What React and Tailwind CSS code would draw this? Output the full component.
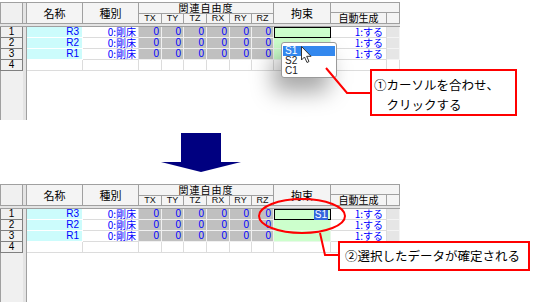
import React from "react";

const F = { fontFamily: '"Noto Sans CJK JP", "Noto Sans", sans-serif' };
const L = { fontFamily: '"Liberation Sans", "Noto Sans CJK JP", sans-serif' };

function HeaderRow() {
  return (
    <div className="flex h-[21px] border-t border-[#a0a0a0]">
      <div className="w-[23px] h-full bg-[#f0f0f0] border-r border-l border-[#a0a0a0]" />
      <div className="w-[4px] h-full bg-[#e4e4e4] border-r border-[#a0a0a0]" />
      <div className="w-[56px] h-full bg-[#f4f4f4] border-r border-[#a0a0a0] flex items-center justify-center text-[11px] leading-none">名称</div>
      <div className="w-[56px] h-full bg-[#f4f4f4] border-r border-[#a0a0a0] flex items-center justify-center text-[11px] leading-none">種別</div>
      <div className="w-[135px] h-full flex flex-col">
        <div className="h-[11px] bg-[#f4f4f4] border-r border-b border-[#a0a0a0] flex items-center justify-center text-[10px] leading-none tracking-[1px]">関連自由度</div>
        <div className="flex h-[10px]">
          {[
            ["TX", "w-[23px]"],
            ["TY", "w-[22px]"],
            ["TZ", "w-[23px]"],
            ["RX", "w-[23px]"],
            ["RY", "w-[22px]"],
            ["RZ", "w-[22px]"],
          ].map(([t, w]) => (
            <div key={t} className={`${w} h-full bg-[#f4f4f4] border-r border-[#a0a0a0] flex items-center justify-center text-[9px] leading-none text-[#111]`} style={L}>
              {t}
            </div>
          ))}
        </div>
      </div>
      <div className="w-[57px] h-full bg-[#f4f4f4] border-r border-[#a0a0a0] flex items-center justify-center text-[11px] leading-none">拘束</div>
      <div className="w-[69px] h-full flex flex-col">
        <div className="h-[11px] bg-[#f4f4f4] border-r border-b border-[#a0a0a0]" />
        <div className="flex h-[10px]">
          <div className="w-[56px] h-full bg-[#f4f4f4] border-r border-[#a0a0a0] flex items-center justify-center text-[10px] leading-none">自動生成</div>
          <div className="w-[13px] h-full bg-[#f4f4f4] border-r border-[#a0a0a0]" />
        </div>
      </div>
    </div>
  );
}

function Band() {
  return <div className="h-[4px] bg-[#e4e4e4] border-t border-b border-[#a0a0a0] w-[400px]" />;
}

function RowNum({ n }) {
  return (
    <div className="w-[23px] h-full bg-[#f0f0f0] border-l border-r border-b border-[#808080] flex items-center justify-center text-[10px] leading-none text-black" style={L}>
      {n}
    </div>
  );
}

function Sep() {
  return <div className="w-[4px] h-full bg-[#e4e4e4] border-r border-[#a0a0a0]" />;
}

const dofW = ["w-[23px]", "w-[22px]", "w-[23px]", "w-[23px]", "w-[22px]", "w-[22px]"];

function DataRow({ n, name, kousoku }) {
  return (
    <div className="flex h-[11px] text-[10px] leading-[10px] text-[#0000ff]">
      <RowNum n={n} />
      <Sep />
      <div className="w-[56px] h-full bg-[#ccfcfc] border-r border-b border-white flex items-center justify-end pr-[3px]" style={L}>{name}</div>
      <div className="w-[56px] h-full bg-white border-r border-b border-[#dcdcdc] flex items-center justify-end pr-[2px]">0:剛床</div>
      {dofW.map((w, i) => (
        <div key={i} className={`${w} h-full bg-[#c0c0c0] border-r border-b border-[#f0f0f0] flex items-center justify-end pr-[2px]`} style={L}>0</div>
      ))}
      {kousoku}
      <div className="w-[56px] h-full bg-white border-r border-b border-[#dcdcdc] flex items-center justify-end pr-[3px]">1:する</div>
      <div className="w-[13px] h-full bg-[#e6e6e6] border-r border-b border-[#f4f4f4]" />
    </div>
  );
}

function EmptyRow() {
  return (
    <div className="flex h-[11px]">
      <RowNum n={4} />
      <Sep />
      {["w-[56px]", "w-[56px]", ...dofW, "w-[57px]", "w-[56px]", "w-[13px]"].map((w, i) => (
        <div key={i} className={`${w} h-full bg-white border-r border-b border-[#dcdcdc]`} />
      ))}
    </div>
  );
}

function Green({ selected, text }) {
  if (selected) {
    return (
      <div className="w-[57px] h-full bg-[#ccffcc] border-[1.5px] border-black flex items-center justify-end pr-[2px]" style={L}>
        {text ? <span className="bg-[#3366dd] text-white px-[1px] leading-none">{text}</span> : null}
      </div>
    );
  }
  return <div className="w-[57px] h-full bg-[#ccffcc] border-r border-b border-[#e8f8e8]" />;
}

function Table({ second }) {
  return (
    <div className="w-[400px] h-[118px] flex flex-col" style={F}>
      <HeaderRow />
      <Band />
      <DataRow n={1} name="R3" kousoku={<Green selected text={second ? "S1" : null} />} />
      <DataRow n={2} name="R2" kousoku={<Green />} />
      <DataRow n={3} name="R1" kousoku={<Green />} />
      <EmptyRow />
      <div className="flex flex-1">
        <div className="w-[23px] h-full bg-[#f0f0f0] border-l border-[#a0a0a0]" />
        <Sep />
        <div className="flex-1 bg-white" />
      </div>
    </div>
  );
}

export default function App() {
  return (
    <div className="relative w-[535px] h-[305px] bg-white overflow-hidden text-black" style={F}>
      <div className="pt-[2px] h-[120px]">
        <Table />
      </div>
      <div className="h-[64px] pt-[13px] pl-[161px]">
        <svg width="80" height="40" viewBox="0 0 80 40">
          <polygon points="20,0 60,0 60,29 80,29 40,39 0,29 20,29" fill="#000080" />
        </svg>
      </div>
      <div>
        <Table second />
      </div>

      {/* dropdown */}
      <div className="absolute left-[281px] top-[42px] w-[56px] h-[36px] bg-white border border-[#9a9a9a] rounded-[3px] shadow-[-8px_14px_22px_rgba(0,0,0,0.35)] pt-[3px] px-[1px] text-[10px] leading-none" style={L}>
        <div className="h-[10px] bg-[#3388ee] text-white flex items-center pl-[2px]">S1</div>
        <div className="h-[10px] flex items-center pl-[2px] text-[#222]">S2</div>
        <div className="h-[10px] flex items-center pl-[2px] text-[#222]">C1</div>
      </div>
      {/* cursor */}
      <svg className="absolute left-[301px] top-[46px]" width="12" height="18" viewBox="0 0 12 18">
        <path d="M0.5 0.5 L0.5 14 L3.5 11 L6 16.5 L8 15.5 L5.7 10.3 L10 10.3 Z" fill="white" stroke="#333" strokeWidth="1" strokeLinejoin="round" />
      </svg>

      {/* red lines */}
      <svg className="absolute left-0 top-0 pointer-events-none" width="535" height="305">
        <polyline points="326,68 347,93 371,93" fill="none" stroke="#ff0000" strokeWidth="2" />
        <ellipse cx="302" cy="216" rx="43" ry="17" fill="none" stroke="#ff0000" strokeWidth="2" />
        <polyline points="320,233 325,255 339,255" fill="none" stroke="#ff0000" strokeWidth="2" />
      </svg>

      {/* callout 1 */}
      <div className="absolute left-[370px] top-[69px] w-[147px] h-[47px] bg-white border-2 border-[#ff0000] pl-[2px] pt-[4px] text-[12.5px] leading-[20px] whitespace-nowrap">
        <div>①カーソルを合わせ、</div>
        <div>　クリックする</div>
      </div>
      {/* callout 2 */}
      <div className="absolute left-[338px] top-[241px] w-[192px] h-[30px] bg-white border-2 border-[#ff0000] pl-[5px] flex items-center text-[12.5px] leading-none whitespace-nowrap">
        ②選択したデータが確定される
      </div>
    </div>
  );
}
